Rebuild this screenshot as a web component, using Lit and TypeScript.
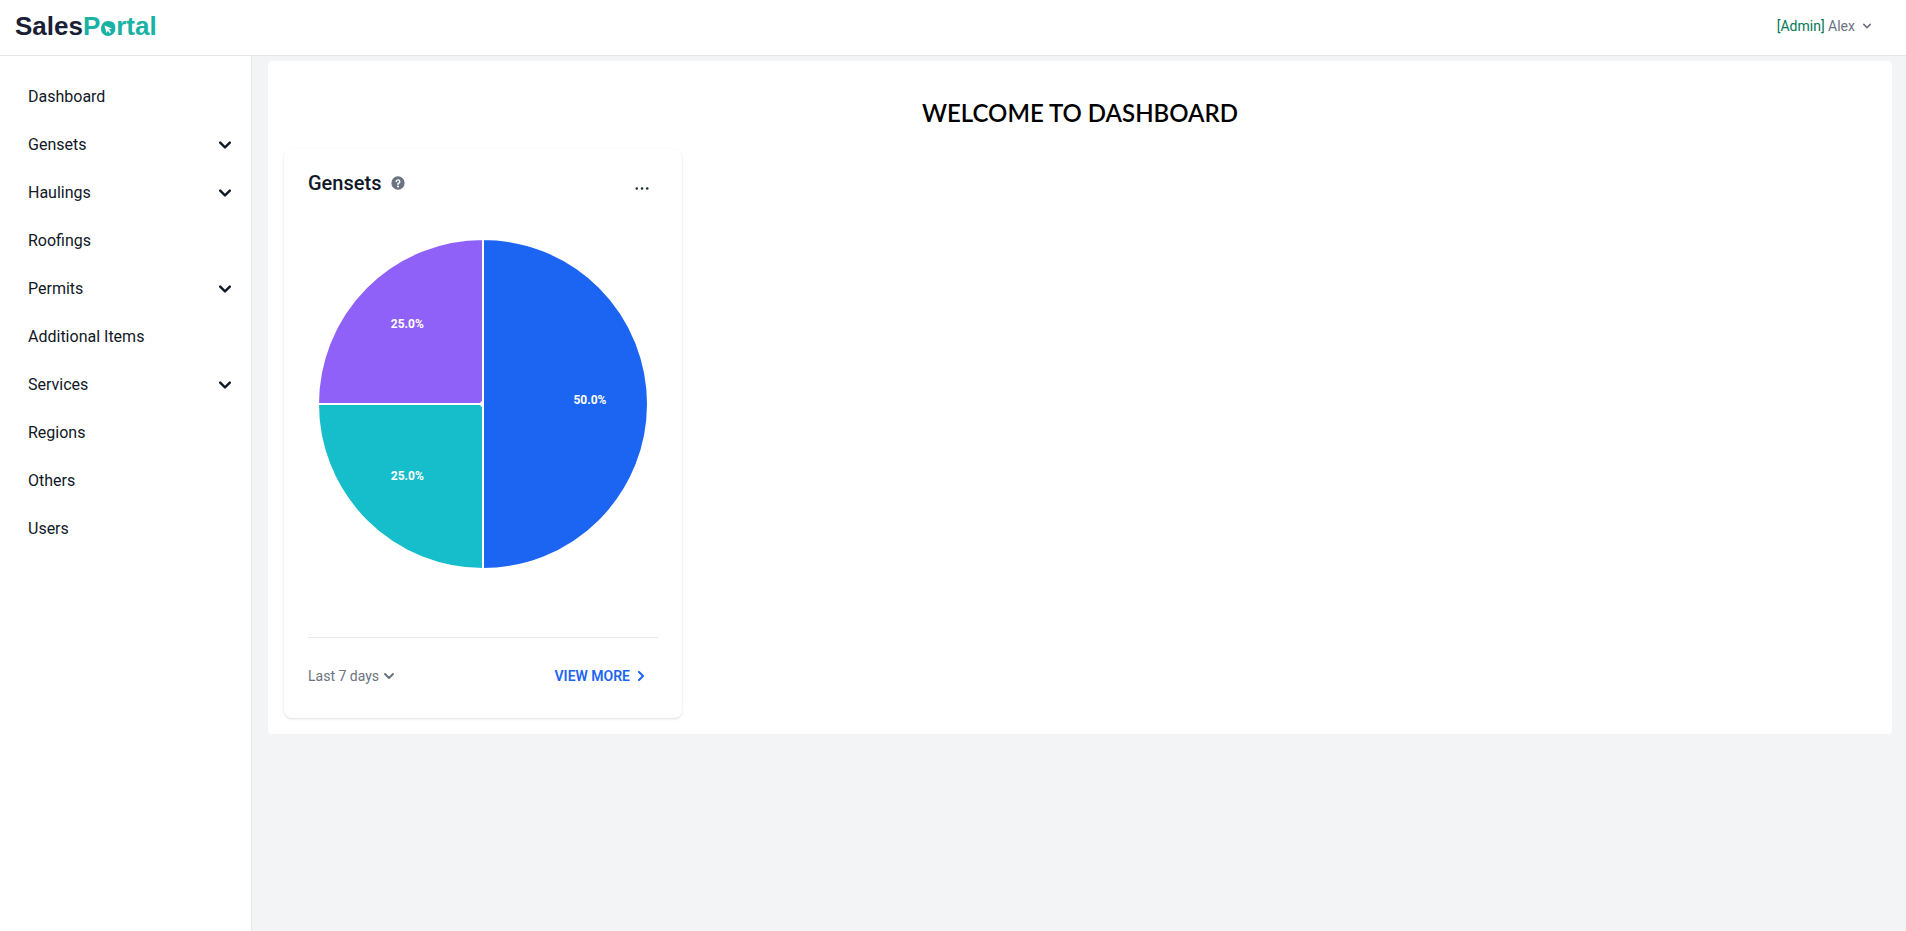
import { LitElement, html, css, svg, nothing } from "lit";
import { customElement, property } from "lit/decorators.js";

const chevronDown = (cls: string) => html`
  <svg class=${cls} viewBox="0 0 10 6" fill="none" aria-hidden="true">
    <path d="m1 1 4 4 4-4" stroke="currentColor" stroke-width="2" stroke-linecap="round" stroke-linejoin="round" />
  </svg>
`;

interface NavItem {
  label: string;
  expandable?: boolean;
}

const NAV: NavItem[] = [
  { label: "Dashboard" },
  { label: "Gensets", expandable: true },
  { label: "Haulings", expandable: true },
  { label: "Roofings" },
  { label: "Permits", expandable: true },
  { label: "Additional Items" },
  { label: "Services", expandable: true },
  { label: "Regions" },
  { label: "Others" },
  { label: "Users" },
];

@customElement("site-header")
class SiteHeader extends LitElement {
  static styles = css`
    .bar {
      display: flex;
      align-items: center;
      justify-content: space-between;
      padding: 10px 31px 13px 15px;
      background: #fff;
      border-bottom: 1px solid #e5e7eb;
    }
    .logo {
      display: block;
      color: #1a1f36;
      font: 700 26px/32px "Liberation Sans", Arial, sans-serif;
      text-decoration: none;
    }
    .accent {
      color: #19b2a4;
    }
    .o {
      position: relative;
    }
    .pointer {
      position: absolute;
      left: 0;
      bottom: 4px;
      width: 16px;
      height: 16px;
    }
    .user {
      display: flex;
      align-items: center;
      gap: 4px;
      height: 32px;
      padding: 0;
      border: 0;
      background: none;
      color: #6b7280;
      font: 400 14px/20px Roboto, sans-serif;
      cursor: pointer;
    }
    .role {
      color: #047857;
    }
    .caret {
      width: 16px;
      height: 16px;
    }
  `;

  render() {
    return html`
      <header class="bar">
        <a class="logo" href="#" aria-label="SalesPortal"
          >Sales<span class="accent"
            >P<span class="o"
              >o<svg class="pointer" viewBox="0 0 16 16" aria-hidden="true">
                <circle cx="8" cy="8" r="7" fill="#19b2a4" />
                <path d="M4.500 4.500l7.500 3-3 1 2 2.500-1.200 1.200-2-2.500-1.300 2.300z" fill="#fff" /></svg></span
            >rtal</span
          ></a
        >
        <button class="user" type="button" aria-haspopup="menu">
          <span><span class="role">[Admin]</span> Alex</span>
          <svg class="caret" viewBox="0 0 20 20" fill="currentColor" aria-hidden="true">
            <path
              d="M5.293 7.293a1 1 0 011.414 0L10 10.586l3.293-3.293a1 1 0 111.414 1.414l-4 4a1 1 0 01-1.414 0l-4-4a1 1 0 010-1.414z"
            />
          </svg>
        </button>
      </header>
    `;
  }
}

@customElement("side-nav")
class SideNav extends LitElement {
  static styles = css`
    :host {
      display: block;
      box-sizing: border-box;
      width: 252px;
      flex: none;
      padding-top: 17px;
      background: #fff;
      border-right: 1px solid #e5e7eb;
    }
    .list {
      margin: 0;
      padding: 0 20px 0 28px;
      list-style: none;
    }
    .item {
      display: flex;
      align-items: center;
      justify-content: space-between;
      box-sizing: border-box;
      width: 100%;
      height: 48px;
      padding: 0;
      border: 0;
      background: none;
      color: #111827;
      font: 400 16px/24px Roboto, sans-serif;
      text-align: left;
      text-decoration: none;
      cursor: pointer;
    }
    .chevron {
      width: 12px;
      height: 12px;
    }
  `;

  render() {
    return html`
      <nav aria-label="Main">
        <ul class="list">
          ${NAV.map(
            (item) => html`<li>
              ${item.expandable
                ? html`<button class="item" type="button" aria-expanded="false">
                    <span>${item.label}</span>${chevronDown("chevron")}
                  </button>`
                : html`<a class="item" href="#">${item.label}</a>`}
            </li>`,
          )}
        </ul>
      </nav>
    `;
  }
}

interface Slice {
  value: number;
  color: string;
}

@customElement("pie-chart")
class PieChart extends LitElement {
  static styles = css`
    :host {
      display: block;
    }
    .chart {
      display: block;
      width: 100%;
      height: auto;
    }
    .label {
      fill: #fff;
      font: 700 12px Roboto, sans-serif;
      text-anchor: middle;
    }
  `;

  @property({ attribute: false }) slices: Slice[] = [];

  private static readonly CX = 175;
  private static readonly CY = 199;
  private static readonly R = 165;
  private static readonly LABEL_R = 107;

  private point(turn: number, radius: number) {
    const angle = turn * 2 * Math.PI;
    return [PieChart.CX + radius * Math.sin(angle), PieChart.CY - radius * Math.cos(angle)];
  }

  render() {
    const { CX, CY, R, LABEL_R } = PieChart;
    const total = this.slices.reduce((sum, s) => sum + s.value, 0);
    let start = 0;
    const arcs = this.slices.map((s) => {
      const share = s.value / total;
      const [x1, y1] = this.point(start, R);
      const [x2, y2] = this.point(start + share, R);
      const [lx, ly] = this.point(start + share / 2, LABEL_R);
      start += share;
      const d = `M${CX} ${CY}L${x1} ${y1}A${R} ${R} 0 ${share > 0.5 ? 1 : 0} 1 ${x2} ${y2}Z`;
      return { d, lx, ly, color: s.color, text: `${(share * 100).toFixed(1)}%` };
    });
    const slice = (a: (typeof arcs)[number]) =>
      svg`<path d=${a.d} fill=${a.color} stroke="#fff" stroke-width="2" />`;
    return html`
      <svg class="chart" viewBox="0 0 350 400" role="img" aria-label="Gensets by share">
        ${arcs.slice(1).map(slice)}
        <circle cx=${CX} cy=${CY} r="3" fill="#fff" />
        ${arcs.length ? slice(arcs[0]) : nothing}
        ${arcs.map((a) => svg`<text class="label" x=${a.lx} y=${a.ly}>${a.text}</text>`)}
      </svg>
    `;
  }
}

@customElement("stat-card")
class StatCard extends LitElement {
  static styles = css`
    :host {
      display: block;
      padding: 24px;
      border-radius: 8px;
      background: #fff;
      box-shadow: 0 1px 3px 0 rgb(0 0 0 / 0.1), 0 1px 2px -1px rgb(0 0 0 / 0.1);
      font-family: Roboto, sans-serif;
    }
    .head {
      display: flex;
      justify-content: space-between;
      height: 32px;
    }
    .title {
      display: flex;
      align-items: center;
      gap: 10px;
      height: 20px;
    }
    .name {
      margin: 0;
      color: #111827;
      font: 500 20px/20px Roboto, sans-serif;
    }
    .help {
      width: 14px;
      height: 14px;
      color: #6b7280;
    }
    .menu {
      display: flex;
      align-items: center;
      justify-content: center;
      width: 32px;
      height: 31px;
      padding: 0;
      border: 0;
      background: none;
      color: #1f2937;
      cursor: pointer;
    }
    .dots {
      width: 14px;
      height: 3px;
    }
    .foot {
      display: flex;
      align-items: center;
      justify-content: space-between;
      margin-top: 32px;
      padding-top: 20px;
      border-top: 1px solid #e5e7eb;
    }
    .range {
      display: flex;
      align-items: center;
      gap: 5px;
      color: #6b7280;
    }
    .select {
      appearance: none;
      field-sizing: content;
      padding: 0;
      border: 0;
      background: none;
      color: inherit;
      font: 400 14px/20px Roboto, sans-serif;
      cursor: pointer;
    }
    .small {
      width: 10px;
      height: 10px;
    }
    .more {
      display: flex;
      align-items: center;
      gap: 6px;
      height: 36px;
      padding: 0 12px;
      color: #1c64f2;
      font: 600 14px/20px Roboto, sans-serif;
      text-decoration: none;
      text-transform: uppercase;
    }
  `;

  @property() heading = "";
  @property({ attribute: false }) slices: Slice[] = [];

  render() {
    return html`
      <div class="head">
        <div class="title">
          <h2 class="name">${this.heading}</h2>
          <svg class="help" viewBox="0 0 20 20" fill="currentColor" aria-hidden="true">
            <path
              d="M10 .5a9.500 9.500 0 1 0 9.500 9.500A9.510 9.510 0 0 0 10 .5Zm0 16a1.500 1.500 0 1 1 0-3 1.500 1.500 0 0 1 0 3Zm1-5.034V12a1 1 0 0 1-2 0v-1.418a1 1 0 0 1 1.038-.999 1.436 1.436 0 0 0 1.488-1.441 1.501 1.501 0 1 0-3-.116.986.986 0 0 1-1.037.961 1 1 0 0 1-.96-1.037A3.500 3.500 0 1 1 11 11.466Z"
            />
          </svg>
        </div>
        <button class="menu" type="button" aria-label="Chart options">
          <svg class="dots" viewBox="0 0 16 3" fill="currentColor" aria-hidden="true">
            <path
              d="M2 0a1.500 1.500 0 1 1 0 3 1.500 1.500 0 0 1 0-3Zm6.041 0a1.500 1.500 0 1 1 0 3 1.500 1.500 0 0 1 0-3ZM14 0a1.500 1.500 0 1 1 0 3 1.500 1.500 0 0 1 0-3Z"
            />
          </svg>
        </button>
      </div>
      <pie-chart .slices=${this.slices}></pie-chart>
      <div class="foot">
        <label class="range">
          <select class="select" aria-label="Date range">
            <option>Last 7 days</option>
          </select>
          ${chevronDown("small")}
        </label>
        <a class="more" href="#"
          >View more
          <svg class="small" viewBox="0 0 6 10" fill="none" aria-hidden="true">
            <path d="m1 9 4-4-4-4" stroke="currentColor" stroke-width="2" stroke-linecap="round" stroke-linejoin="round" />
          </svg>
        </a>
      </div>
    `;
  }
}

const GENSETS: Slice[] = [
  { value: 2, color: "#1c64f2" },
  { value: 1, color: "#16bdca" },
  { value: 1, color: "#9061f9" },
];

@customElement("app-root")
class AppRoot extends LitElement {
  static styles = css`
    :host {
      display: flex;
      flex-direction: column;
      min-height: 100vh;
      background: #f3f4f6;
      font-family: Roboto, sans-serif;
    }
    .body {
      display: flex;
      flex: 1;
    }
    .main {
      flex: 1;
      min-width: 0;
      padding: 5px 14px 16px 16px;
    }
    .panel {
      padding: 0 16px 16px;
      border-radius: 4px;
      background: #fff;
    }
    .welcome {
      margin: 0;
      padding: 36px 0 20px;
      color: #000;
      font: 600 24px/32px Lato, sans-serif;
      text-align: center;
    }
    .cards {
      display: grid;
      grid-template-columns: repeat(4, minmax(0, 1fr));
    }
  `;

  render() {
    return html`
      <site-header></site-header>
      <div class="body">
        <side-nav></side-nav>
        <main class="main">
          <section class="panel">
            <h1 class="welcome">WELCOME TO DASHBOARD</h1>
            <div class="cards">
              <stat-card heading="Gensets" .slices=${GENSETS}></stat-card>
            </div>
          </section>
        </main>
      </div>
    `;
  }
}
